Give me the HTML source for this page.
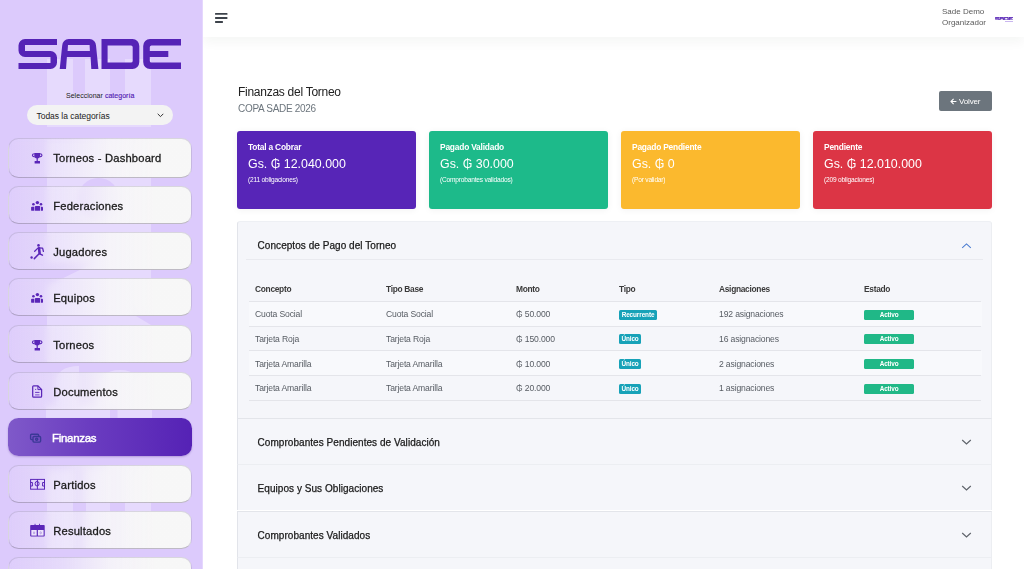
<!DOCTYPE html>
<html><head><meta charset="utf-8">
<style>
*{box-sizing:border-box;margin:0;padding:0}
html,body{width:1024px;height:569px;overflow:hidden;background:#fff;font-family:"Liberation Sans",sans-serif}
#hdr,.card,.acc,.abs,.nav,.th,.td,.rl,.bd{will-change:transform}
svg.abs,#sb .abs{will-change:auto}
.abs{position:absolute}
#sb{position:absolute;left:0;top:0;width:203px;height:569px;background:#dccafc;overflow:hidden;z-index:5;box-shadow:inset -1px 0 0 rgba(255,255,255,0.25)}
.nav{position:absolute;left:8px;width:183.5px;height:38.4px;border-radius:10.5px;border:1px solid rgba(140,130,160,0.28);border-bottom-color:rgba(110,100,125,0.42);
 background:linear-gradient(90deg,rgba(248,248,248,0.08) 0%,rgba(248,248,248,0.38) 30%,rgba(248,248,248,0.85) 55%,rgba(247,247,247,0.99) 80%);backdrop-filter:blur(3px);-webkit-backdrop-filter:blur(3px)}
.nav span{position:absolute;left:44.2px;top:13px;font-size:11.2px;color:#1b1b1b;letter-spacing:0.2px;white-space:nowrap;-webkit-text-stroke:0.3px #1b1b1b}
.nav svg{position:absolute}
#hdr{position:absolute;left:203px;top:0;width:821px;height:37px;background:#fff;box-shadow:0 5px 12px rgba(30,40,20,0.045)}
.card{position:absolute;top:131.1px;width:179px;height:77.6px;border-radius:3px;color:#fff;box-shadow:0 1px 7px rgba(0,0,0,0.055)}
.card .t{position:absolute;left:11px;top:10.5px;font-size:8.4px;font-weight:700;letter-spacing:-0.2px;white-space:nowrap}
.card .v{position:absolute;left:11px;top:25.6px;font-size:12.4px;letter-spacing:0px;white-space:nowrap}
.card .s{position:absolute;left:11px;top:44.6px;font-size:6.6px;letter-spacing:-0.2px;white-space:nowrap}
.acc{position:absolute;left:237px;width:755px;background:#f5f6fa;border-left:1px solid #e2e4ea;border-right:1px solid #eceef2}
.acc .h{position:absolute;left:19.6px;font-size:10px;color:#1a1a1a;letter-spacing:0.05px;white-space:nowrap;-webkit-text-stroke:0.25px #1a1a1a}
.th{position:absolute;top:283.6px;font-size:8.4px;font-weight:700;color:#3a3a3a;letter-spacing:-0.3px;white-space:nowrap}
.td{position:absolute;font-size:8.6px;color:#575c63;letter-spacing:-0.15px;white-space:nowrap}
.rl{position:absolute;left:248.8px;width:732px;height:1px;background:#e4e5ea}
.bd{position:absolute;height:9.5px;border-radius:1.5px;color:#fff;font-size:6.4px;font-weight:700;text-align:center;line-height:10px;white-space:nowrap;letter-spacing:-0.1px}
</style></head><body>
<div id="sb">
 <!-- watermark -->
 <svg class="abs" style="left:0;top:0" width="203" height="569" viewBox="0 0 203 569">
  <g fill="#fff" fill-opacity="0.3">
   <path d="M47 59H73V127H47ZM85 59H110V127H85ZM125 59H151V127H125ZM73 93.4H85V127H73ZM110 93.4H125V127H110Z"/>
   <path fill-rule="evenodd" d="M47 140H151V262H47ZM77.5 199A21 21 0 1 0 119.5 199A21 21 0 1 0 77.5 199Z"/>
   <path d="M47 286L96 262H151V286Z"/>
   <path d="M47 286H151V310H47Z"/>
   <path d="M47 310H126L151 325V363H47Z"/>
   <path d="M56 405V384Q56 366 79 366V405ZM98 405V392Q98 370 120 370Q142 370 142 392V405Z"/>
   <path d="M46 405H110V418H46ZM117.5 405H152V418H117.5ZM46 418H152V456H46Z"/>
   <path d="M47 470H73V549H47ZM86 470H110V549H86ZM125 470H151V549H125Z"/>
  </g>
 </svg>
 <!-- logo -->
 <svg class="abs" style="left:0;top:0" width="203" height="90" viewBox="0 0 203 90">
  <g id="logo" fill="#5523b6" fill-rule="evenodd">
   <path d="M57 39H25A6.5 6.5 0 0 0 18.5 45.5V50.5A6.5 6.5 0 0 0 25 57H50.5V63H18.5V69H50.5A6.5 6.5 0 0 0 57 62.5V57.5A6.5 6.5 0 0 0 50.5 51H25V45H57Z"/>
   <path d="M59.7 69L62.2 45.5A6.5 6.5 0 0 1 68.7 39H89.6A6.5 6.5 0 0 1 96 45.5L98.4 69H91.3L90.6 57H66.9L66 69ZM67.6 51H89.9L89.6 45H68Z"/>
   <path d="M101.5 39H132.5A7 7 0 0 1 139.3 46V62A7 7 0 0 1 132.5 69H101.5ZM107.6 45.4V62.6H131A1.7 1.7 0 0 0 132.7 61V47A1.7 1.7 0 0 0 131 45.4Z"/>
   <path d="M181 39H150A7 7 0 0 0 143.2 46V62A7 7 0 0 0 150 69H181V62.6H151.5A1.7 1.7 0 0 1 149.8 61V57H168.3V51H149.8V47A1.7 1.7 0 0 1 151.5 45.4H181Z"/>
  </g>
 </svg>
 <div class="abs" style="left:66px;top:91.5px;font-size:7px;color:#1a1a1a;letter-spacing:0.03px;white-space:nowrap">Seleccionar <span style="color:#5221b3;-webkit-text-stroke:0.15px #5221b3">categoría</span></div>
 <div class="abs" style="left:27px;top:105px;width:146px;height:20px;border-radius:10px;background:#f3f3f3">
  <span class="abs" style="left:9.5px;top:5.5px;font-size:8.5px;color:#1b1b1b;letter-spacing:-0.03px;white-space:nowrap">Todas la categorías</span>
  <svg class="abs" style="left:130px;top:8px" width="7" height="5" viewBox="0 0 7 5"><path d="M0.7 0.8L3.5 3.6L6.3 0.8" fill="none" stroke="#333" stroke-width="1"/></svg>
 </div>
 <!-- nav items -->
 <div class="nav" style="top:138px;height:39.8px"><svg class="ic" style="left:17px;top:8.9px" width="26" height="22" viewBox="0 0 26 22"><g fill="#5a26b8"><path d="M8.3 4.9H14.1V7.4Q14.1 10.2 11.2 10.4Q8.3 10.2 8.3 7.4Z"/><rect x="10.6" y="10" width="1.2" height="3.2"/><rect x="8.6" y="13" width="5.4" height="2.6" rx="0.3"/></g><g fill="none" stroke="#5a26b8" stroke-width="1.1"><path d="M8.5 5.8Q6.4 5.8 6.4 7.2Q6.4 8.6 8.7 8.9"/><path d="M13.9 5.8Q16 5.8 16 7.2Q16 8.6 13.7 8.9"/></g></svg><span>Torneos - Dashboard</span></div>
 <div class="nav" style="top:186.1px"><svg class="ic" style="left:17px;top:8.9px" width="26" height="22" viewBox="0 0 26 22"><g fill="#5a26b8"><circle cx="11.4" cy="6.6" r="1.7"/><rect x="9" y="10" width="5.1" height="4.8" rx="0.5"/><circle cx="7.4" cy="8.2" r="1.3"/><path d="M5.1 11.6Q5.1 10.7 6 10.7H8.4V14.8H6Q5.1 14.8 5.1 13.9Z"/><circle cx="15" cy="8.2" r="1.3"/><path d="M14.9 10.7H16.1Q17 10.7 17 11.6V13.9Q17 14.8 16.1 14.8H14.9Z"/></g></svg><span>Federaciones</span></div>
 <div class="nav" style="top:232.1px"><svg class="ic" style="left:17px;top:8.9px" width="26" height="22" viewBox="0 0 26 22"><g fill="#5a26b8"><circle cx="12.5" cy="3.4" r="1.3"/><circle cx="5.6" cy="15.5" r="1.2"/></g><g fill="none" stroke="#5a26b8" stroke-linecap="round" stroke-linejoin="round"><path d="M11.6 6.4L8.7 9.2" stroke-width="1.3"/><path d="M12.3 5.9L16.6 6.1L17.4 9.4" stroke-width="1.3"/><path d="M13 6.2L13.6 11.2" stroke-width="2.6"/><path d="M13.8 11.8L16.4 13.1" stroke-width="1.5"/><path d="M13.1 11.8L8.3 16.6" stroke-width="1.5"/></g></svg><span>Jugadores</span></div>
 <div class="nav" style="top:278.3px"><svg class="ic" style="left:17px;top:8.7px" width="26" height="22" viewBox="0 0 26 22"><g fill="#5a26b8"><circle cx="11.4" cy="6.6" r="1.7"/><rect x="9" y="10" width="5.1" height="4.8" rx="0.5"/><circle cx="7.4" cy="8.2" r="1.3"/><path d="M5.1 11.6Q5.1 10.7 6 10.7H8.4V14.8H6Q5.1 14.8 5.1 13.9Z"/><circle cx="15" cy="8.2" r="1.3"/><path d="M14.9 10.7H16.1Q17 10.7 17 11.6V13.9Q17 14.8 16.1 14.8H14.9Z"/></g></svg><span>Equipos</span></div>
 <div class="nav" style="top:325.1px"><svg class="ic" style="left:17px;top:8.9px" width="26" height="22" viewBox="0 0 26 22"><g fill="#5a26b8"><path d="M8.3 4.9H14.1V7.4Q14.1 10.2 11.2 10.4Q8.3 10.2 8.3 7.4Z"/><rect x="10.6" y="10" width="1.2" height="3.2"/><rect x="8.6" y="13" width="5.4" height="2.6" rx="0.3"/></g><g fill="none" stroke="#5a26b8" stroke-width="1.1"><path d="M8.5 5.8Q6.4 5.8 6.4 7.2Q6.4 8.6 8.7 8.9"/><path d="M13.9 5.8Q16 5.8 16 7.2Q16 8.6 13.7 8.9"/></g></svg><span>Torneos</span></div>
 <div class="nav" style="top:371.9px"><svg class="ic" style="left:17px;top:9.1px" width="26" height="22" viewBox="0 0 26 22"><g fill="none" stroke="#5a26b8" stroke-width="1.25"><path d="M7.6 3.9H11.9L15.6 7.6V14.3Q15.6 15.2 14.7 15.2H7.6Q6.7 15.2 6.7 14.3V4.8Q6.7 3.9 7.6 3.9Z"/><path d="M11.9 3.9V7.6H15.6" stroke-width="1"/><path d="M9.1 10.4H13.5" stroke-width="0.9"/></g><rect x="9.1" y="12.2" width="4.4" height="1.3" fill="#5a26b8" opacity="0.6"/><rect x="9.1" y="6.9" width="1.1" height="1.1" fill="#5a26b8" opacity="0.8"/></svg><span>Documentos</span></div>
 <div class="nav" style="top:418.4px;border:none;background:linear-gradient(90deg,#7f59c9 0%,#6a3cc0 45%,#5522b5 100%);box-shadow:0 1px 2px rgba(60,20,120,0.25)"><svg class="ic" style="left:16px;top:9.8px" width="26" height="22" viewBox="0 0 26 22"><g fill="none" stroke="#3a3896" stroke-width="1.4"><path d="M8.8 11.6H7.6Q6.6 11.6 6.6 10.6V7.3Q6.6 6.3 7.6 6.3H13.7Q14.6 6.3 14.6 7.3V8.2"/><rect x="9" y="8.5" width="7.6" height="5.6" rx="1"/><circle cx="12.7" cy="11.2" r="1.1"/></g></svg><span style="color:#fff;-webkit-text-stroke:0.45px #fff;left:44px;top:14.2px;font-size:11.5px;letter-spacing:-0.3px">Finanzas</span></div>
 <div class="nav" style="top:465px"><svg class="ic" style="left:15px;top:9.0px" width="26" height="22" viewBox="0 0 26 22"><g fill="none" stroke="#5a26b8" stroke-width="1"><rect x="6.6" y="4.4" width="13.9" height="9.8"/><path d="M13.4 4.4V14.2M6.6 7.5H8.4V11H6.6M20.5 7.5H18.6V11H20.5"/><ellipse cx="13.1" cy="8.7" rx="2" ry="2.3"/></g></svg><span>Partidos</span></div>
 <div class="nav" style="top:510.6px"><svg class="ic" style="left:15px;top:8.4px" width="26" height="22" viewBox="0 0 26 22"><g fill="#5a26b8"><rect x="6.2" y="5" width="14.5" height="11.6" rx="0.8"/><rect x="10.6" y="3.8" width="0.9" height="1.5"/><rect x="15.1" y="3.8" width="0.9" height="1.5"/></g><g fill="#ece4fb"><rect x="7.3" y="10" width="5.4" height="5.6"/><rect x="13.9" y="10" width="5.7" height="5.6"/></g><g fill="none" stroke="#5a26b8" stroke-width="0.6" opacity="0.55"><ellipse cx="10" cy="12.8" rx="0.7" ry="1.1"/><ellipse cx="16.7" cy="12.8" rx="0.7" ry="1.1"/></g></svg><span>Resultados</span></div>
 <div class="nav" style="top:556.6px"><span></span></div>
</div>

<div id="hdr">
 <svg class="abs" style="left:11.7px;top:13px" width="13" height="10" viewBox="0 0 13 10"><g fill="#3d434b"><rect x="0" y="0" width="12.5" height="1.8" rx="0.6"/><rect x="0" y="4.1" width="12.5" height="1.8" rx="0.6"/><rect x="0" y="8.1" width="8" height="1.8" rx="0.6"/></g></svg>
 <div class="abs" style="left:738.5px;top:6.2px;font-size:8px;line-height:11.4px;color:#5a5a5a;letter-spacing:0px;white-space:nowrap">Sade Demo<br>Organizador</div>
 <svg class="abs" style="left:791.8px;top:16.7px" width="18.2" height="3.5" viewBox="18 38 164 32"><use href="#logo" stroke="#5523b6" stroke-width="3"/></svg>
 <div class="abs" style="left:802.2px;top:20.8px;width:7.8px;height:1px;background:#c9b6ef"></div>
</div>

<!-- title -->
<div class="abs" style="left:237.5px;top:84.5px;font-size:12px;color:#212121;letter-spacing:-0.27px;white-space:nowrap">Finanzas del Torneo</div>
<div class="abs" style="left:237.5px;top:102.5px;font-size:10px;color:#6c757d;letter-spacing:-0.3px;white-space:nowrap">COPA SADE 2026</div>
<div class="abs" style="left:939px;top:91px;width:53px;height:20px;border-radius:2px;background:#6c757d"><svg class="abs" style="left:11px;top:6.5px" width="7" height="7" viewBox="0 0 7 7"><path d="M6.4 3.5H1M3.6 0.9L1 3.5L3.6 6.1" fill="none" stroke="#fff" stroke-width="1.1"/></svg><span class="abs" style="left:20.4px;top:5.6px;color:#fff;font-size:8px;letter-spacing:-0.15px;white-space:nowrap">Volver</span></div>

<!-- cards -->
<div class="card" style="left:237px;background:#5725b7"><div class="t">Total a Cobrar</div><div class="v">Gs. &#8370; 12.040.000</div><div class="s">(211 obligaciones)</div></div>
<div class="card" style="left:429px;background:#1dba8a"><div class="t">Pagado Validado</div><div class="v">Gs. &#8370; 30.000</div><div class="s">(Comprobantes validados)</div></div>
<div class="card" style="left:621px;background:#fbb92e"><div class="t">Pagado Pendiente</div><div class="v">Gs. &#8370; 0</div><div class="s">(Por validar)</div></div>
<div class="card" style="left:813px;background:#dc3545"><div class="t">Pendiente</div><div class="v">Gs. &#8370; 12.010.000</div><div class="s">(209 obligaciones)</div></div>

<!-- accordion -->
<div class="acc" style="top:221.4px;height:196.6px;border-top:1px solid #eef0f4;border-radius:3px 3px 0 0"><div class="h" style="top:17.9px">Conceptos de Pago del Torneo</div></div>
<div class="abs" style="left:246px;top:259px;width:737px;height:1px;background:#e9eaef"></div>
<svg class="abs" style="left:961px;top:241.6px" width="11" height="7" viewBox="0 0 11 7"><path d="M1.2 5.9L5.5 1.9L9.8 5.9" fill="none" stroke="#4a7bd0" stroke-width="1.05"/></svg>

<!-- table -->
<div class="abs" style="left:248.8px;top:302.0px;width:733px;height:23.6px;background:#f8f9fc"></div>
<div class="abs" style="left:248.8px;top:351.4px;width:733px;height:23.7px;background:#f8f9fc"></div>
<div class="rl" style="top:301.0px"></div>
<div class="rl" style="top:325.6px"></div>
<div class="rl" style="top:350.4px"></div>
<div class="rl" style="top:375.1px"></div>
<div class="rl" style="top:399.9px"></div>
<div class="th" style="left:255.3px">Concepto</div>
<div class="th" style="left:385.6px">Tipo Base</div>
<div class="th" style="left:515.9px">Monto</div>
<div class="th" style="left:618.7px">Tipo</div>
<div class="th" style="left:719px">Asignaciones</div>
<div class="th" style="left:863.7px">Estado</div>
<div class="td" style="left:255.3px;top:309.1px">Cuota Social</div>
<div class="td" style="left:385.6px;top:309.1px">Cuota Social</div>
<div class="td" style="left:515.9px;top:309.1px">&#8370; 50.000</div>
<div class="bd" style="left:618.7px;top:309.7px;width:38px;background:#17a2b8">Recurrente</div>
<div class="td" style="left:719px;top:309.1px">192 asignaciones</div>
<div class="bd" style="left:863.7px;top:309.7px;width:50.2px;background:#20b887">Activo</div>
<div class="td" style="left:255.3px;top:333.7px">Tarjeta Roja</div>
<div class="td" style="left:385.6px;top:333.7px">Tarjeta Roja</div>
<div class="td" style="left:515.9px;top:333.7px">&#8370; 150.000</div>
<div class="bd" style="left:618.7px;top:334.3px;width:22.1px;background:#17a2b8">Único</div>
<div class="td" style="left:719px;top:333.7px">16 asignaciones</div>
<div class="bd" style="left:863.7px;top:334.3px;width:50.2px;background:#20b887">Activo</div>
<div class="td" style="left:255.3px;top:358.5px">Tarjeta Amarilla</div>
<div class="td" style="left:385.6px;top:358.5px">Tarjeta Amarilla</div>
<div class="td" style="left:515.9px;top:358.5px">&#8370; 10.000</div>
<div class="bd" style="left:618.7px;top:359.1px;width:22.1px;background:#17a2b8">Único</div>
<div class="td" style="left:719px;top:358.5px">2 asignaciones</div>
<div class="bd" style="left:863.7px;top:359.1px;width:50.2px;background:#20b887">Activo</div>
<div class="td" style="left:255.3px;top:383.2px">Tarjeta Amarilla</div>
<div class="td" style="left:385.6px;top:383.2px">Tarjeta Amarilla</div>
<div class="td" style="left:515.9px;top:383.2px">&#8370; 20.000</div>
<div class="bd" style="left:618.7px;top:383.8px;width:22.1px;background:#17a2b8">Único</div>
<div class="td" style="left:719px;top:383.2px">1 asignaciones</div>
<div class="bd" style="left:863.7px;top:383.8px;width:50.2px;background:#20b887">Activo</div>
<div class="acc" style="top:418px;height:46.3px;border-top:1px solid #e3e5ea"><div class="h" style="top:17.9px">Comprobantes Pendientes de Validación</div></div>
<svg class="abs" style="left:961px;top:439.0px" width="11" height="7" viewBox="0 0 11 7"><path d="M1.2 1L5.5 5L9.8 1" fill="none" stroke="#5f646b" stroke-width="1.2"/></svg>
<div class="acc" style="top:464.3px;height:46.4px;border-top:1px solid #eceef2"><div class="h" style="top:17.9px">Equipos y Sus Obligaciones</div></div>
<svg class="abs" style="left:961px;top:485.1px" width="11" height="7" viewBox="0 0 11 7"><path d="M1.2 1L5.5 5L9.8 1" fill="none" stroke="#5f646b" stroke-width="1.2"/></svg>
<div class="acc" style="top:510.7px;height:45.8px;border-top:1px solid #e3e5ea"><div class="h" style="top:17.9px">Comprobantes Validados</div></div>
<svg class="abs" style="left:961px;top:531.5px" width="11" height="7" viewBox="0 0 11 7"><path d="M1.2 1L5.5 5L9.8 1" fill="none" stroke="#5f646b" stroke-width="1.2"/></svg>
<div class="acc" style="top:556.5px;height:46.2px;border-top:1px solid #eceef2"><div class="h" style="top:17.9px"></div></div>
</body></html>
